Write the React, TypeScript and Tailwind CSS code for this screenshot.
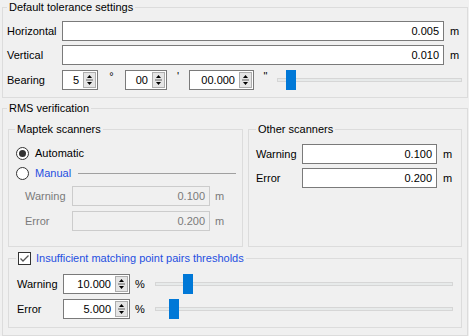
import React from "react";

const FONT = { fontFamily: '"Liberation Sans", Arial, sans-serif' };

function TextBox({ value, w, disabled }: { value: string; w: string; disabled?: boolean }) {
  return (
    <div
      className={`${w} h-[20px] flex items-center justify-end pr-[4px] border ${
        disabled ? "border-[#cccccc] bg-[#f0f0f0] text-[#7a7a7a]" : "border-[#7a7a7a] bg-white text-black"
      }`}
    >
      {value}
    </div>
  );
}

function SpinArrows() {
  return (
    <svg width="13" height="16" viewBox="0 0 13 16" className="shrink-0">
      <rect x="0.5" y="0.5" width="12" height="15" fill="#e5e5e5" stroke="#adadad" />
      <path d="M4 6 L6.5 3 L9 6 Z" fill="#000" />
      <line x1="3" y1="8" x2="10" y2="8" stroke="#606060" strokeWidth="1" />
      <path d="M4 10 L9 10 L6.5 13 Z" fill="#000" />
    </svg>
  );
}

function SpinBox({ value, w }: { value: string; w: string }) {
  return (
    <div className={`${w} h-[20px] flex items-center border border-[#7a7a7a] bg-white`}>
      <div className="flex-1 text-right pr-[4px]">{value}</div>
      <div className="mr-[1px] flex">
        <SpinArrows />
      </div>
    </div>
  );
}

function Slider({ w, pos }: { w: string; pos: number }) {
  return (
    <div className={`${w} h-[20px] relative`}>
      <div className="absolute left-0 right-0 top-[8px] h-[4px] bg-[#e7eaea] border border-[#d6d6d6]" />
      <div className="absolute top-0 w-[10px] h-[20px] bg-[#0078d7]" style={{ left: pos }} />
    </div>
  );
}

function Radio({ checked }: { checked?: boolean }) {
  return (
    <div className="w-[13px] h-[13px] rounded-full border border-[#333333] bg-white flex items-center justify-center shrink-0">
      {checked && <div className="w-[7px] h-[7px] rounded-full bg-[#333333]" />}
    </div>
  );
}

export default function App() {
  return (
    <div className="w-[469px] h-[336px] bg-[#f0f0f0] pt-[1px] pl-[2px] text-[11px] leading-[13px] text-black overflow-hidden" style={FONT}>
      {/* Default tolerance settings */}
      <fieldset className="w-[466px] border border-[#dcdcdc]">
        <legend className="ml-[4px] px-[2px] leading-[13px]">Default tolerance settings</legend>
        <div className="pl-[4px] pt-[7px] pb-[7px] flex flex-col gap-[4px]">
          <div className="flex items-center h-[20px]">
            <div className="w-[55px]">Horizontal</div>
            <TextBox value="0.005" w="w-[382px]" />
            <div className="ml-[6px]">m</div>
          </div>
          <div className="flex items-center h-[20px]">
            <div className="w-[55px]">Vertical</div>
            <TextBox value="0.010" w="w-[382px]" />
            <div className="ml-[6px]">m</div>
          </div>
          <div className="flex items-center h-[20px] mt-[1px]">
            <div className="w-[55px]">Bearing</div>
            <SpinBox value="5" w="w-[36px]" />
            <div className="w-[27px] text-center self-start">°</div>
            <SpinBox value="00" w="w-[42px]" />
            <div className="w-[22px] text-center self-start">'</div>
            <SpinBox value="00.000" w="w-[65px]" />
            <div className="w-[23px] text-center self-start">"</div>
            <Slider w="w-[185px]" pos={9} />
          </div>
        </div>
      </fieldset>

      {/* RMS verification */}
      <fieldset className="w-[466px] mt-[4px] border border-[#dcdcdc]">
        <legend className="ml-[4px] px-[2px] leading-[13px]">RMS verification</legend>
        <div className="pl-[5px] pt-[8px] pb-[7px] flex flex-col">
          <div className="flex gap-[5px] items-stretch">
            <fieldset className="w-[235px] border border-[#dcdcdc]">
              <legend className="ml-[6px] px-[2px] leading-[13px]">Maptek scanners</legend>
              <div className="pl-[7px] pr-[6px] pt-[9px] pb-[15px] flex flex-col">
                <div className="flex items-center h-[16px] gap-[6px]">
                  <Radio checked />
                  <span>Automatic</span>
                </div>
                <div className="flex items-center h-[16px] gap-[6px] mt-[4px]">
                  <Radio />
                  <span className="text-[#1f4fe0]">Manual</span>
                  <div className="flex-1 h-px bg-[#a0a0a0] ml-[1px]" />
                </div>
                <div className="pl-[9px] mt-[5px] flex flex-col gap-[5px] text-[#7a7a7a]">
                  <div className="flex items-center h-[20px]">
                    <div className="w-[47px]">Warning</div>
                    <TextBox value="0.100" w="w-[138px]" disabled />
                    <div className="ml-[5px]">m</div>
                  </div>
                  <div className="flex items-center h-[20px]">
                    <div className="w-[47px]">Error</div>
                    <TextBox value="0.200" w="w-[138px]" disabled />
                    <div className="ml-[5px]">m</div>
                  </div>
                </div>
              </div>
            </fieldset>
            <fieldset className="w-[214px] border border-[#dcdcdc]">
              <legend className="ml-[7px] px-[2px] leading-[13px]">Other scanners</legend>
              <div className="pl-[7px] pt-[8px] flex flex-col gap-[4px]">
                <div className="flex items-center h-[20px]">
                  <div className="w-[46px]">Warning</div>
                  <TextBox value="0.100" w="w-[135px]" />
                  <div className="ml-[6px]">m</div>
                </div>
                <div className="flex items-center h-[20px]">
                  <div className="w-[46px]">Error</div>
                  <TextBox value="0.200" w="w-[135px]" />
                  <div className="ml-[6px]">m</div>
                </div>
              </div>
            </fieldset>
          </div>

          <fieldset className="w-[454px] mt-[3px] border border-[#dcdcdc]">
            <legend className="ml-[7px] px-[2px]">
              <div className="flex items-center h-[16px] gap-[5px]">
                <svg width="13" height="13" viewBox="0 0 13 13" className="shrink-0">
                  <rect x="0.5" y="0.5" width="12" height="12" fill="#fff" stroke="#333333" />
                  <path d="M2.5 6.5 L5 9 L10.5 3.5" fill="none" stroke="#555555" strokeWidth="1.3" />
                </svg>
                <span className="text-[#1f4fe0]">Insufficient matching point pairs thresholds</span>
              </div>
            </legend>
            <div className="pl-[8px] pt-[8px] pb-[8px] flex flex-col gap-[5px]">
              <div className="flex items-center h-[20px]">
                <div className="w-[46px]">Warning</div>
                <SpinBox value="10.000" w="w-[67px]" />
                <div className="ml-[5px] w-[20px]">%</div>
                <Slider w="w-[298px]" pos={28} />
              </div>
              <div className="flex items-center h-[20px]">
                <div className="w-[46px]">Error</div>
                <SpinBox value="5.000" w="w-[67px]" />
                <div className="ml-[5px] w-[20px]">%</div>
                <Slider w="w-[298px]" pos={14} />
              </div>
            </div>
          </fieldset>
        </div>
      </fieldset>
    </div>
  );
}
